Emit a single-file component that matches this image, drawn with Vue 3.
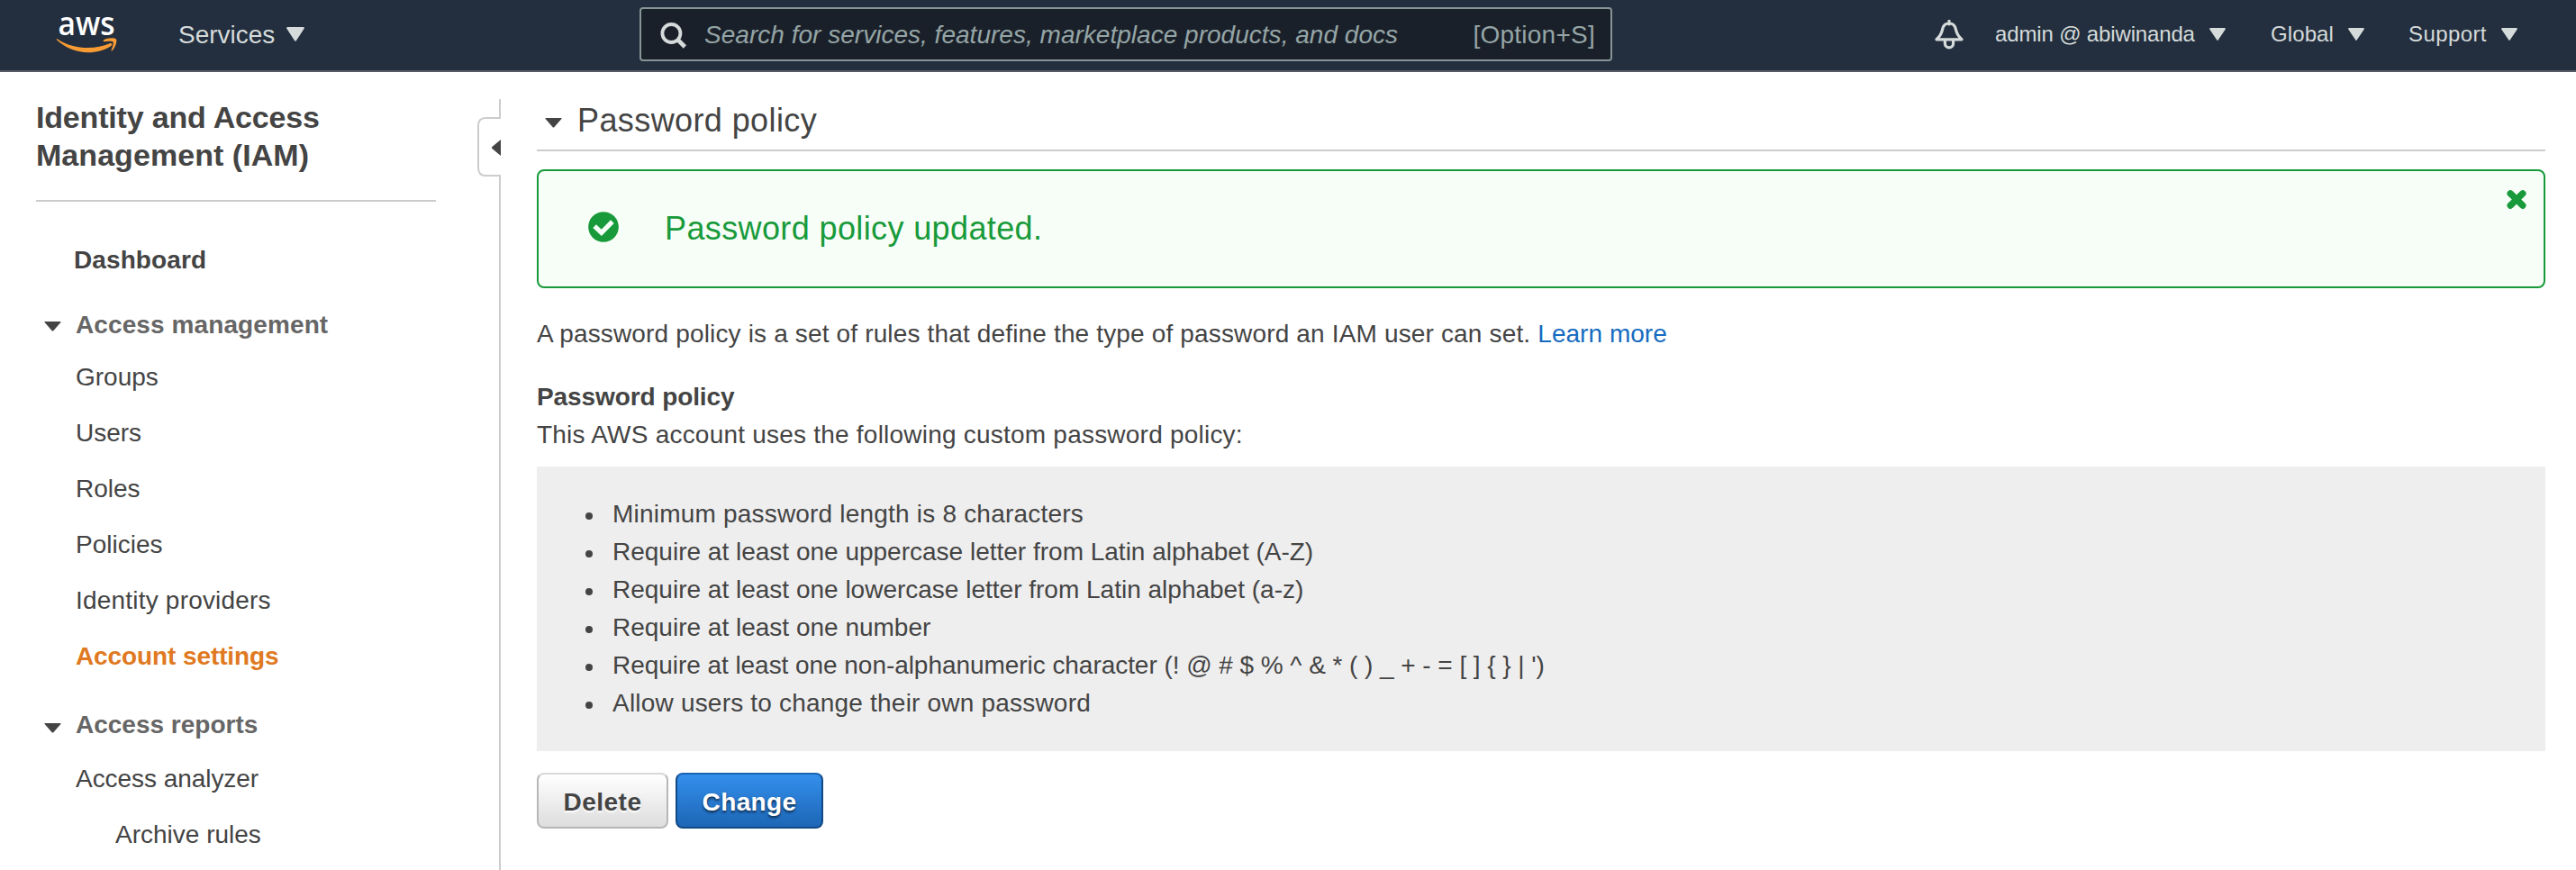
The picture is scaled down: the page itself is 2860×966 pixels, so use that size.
<script setup>
const accessManagement = [
  { label: 'Groups' },
  { label: 'Users' },
  { label: 'Roles' },
  { label: 'Policies' },
  { label: 'Identity providers', cls: 'wide' },
  { label: 'Account settings', cls: 'active' },
]
const accessReports = [
  { label: 'Access analyzer', cls: 'tight' },
  { label: 'Archive rules', cls: 'nested' },
]
const rules = [
  { text: 'Minimum password length is 8 characters', cls: 'wide' },
  { text: 'Require at least one uppercase letter from Latin alphabet (A-Z)' },
  { text: 'Require at least one lowercase letter from Latin alphabet (a-z)' },
  { text: 'Require at least one number' },
  { text: "Require at least one non-alphanumeric character (! @ # $ % ^ & * ( ) _ + - = [ ] { } | ')", cls: 'tight' },
  { text: 'Allow users to change their own password', cls: 'wide' },
]
</script>

<template>
  <div class="page">
    <header class="topbar">
      <svg class="logo" width="70" height="62" viewBox="0 0 70 62">
        <text x="2.6" y="38.5" textLength="63" lengthAdjust="spacingAndGlyphs" class="logo-text">aws</text>
        <g class="smile">
          <path d="M1.6 43.2C20 55.6 44 55.2 59.8 48.2C62 47.2 63.3 49.6 61.4 51C44 62 19 61 1.2 44.6C.4 43.6 .8 42.7 1.6 43.2Z" />
          <path d="M53 44.6C57 41.8 65.5 41.8 67 43.6C68.4 45.6 66 53.3 62.6 56.2C61.8 56.9 61.2 56.5 61.6 55.6C62.7 53 64.4 48 63.5 46.6C62.5 45.3 57 46 54 46.3C52.6 46.4 52.2 45.2 53 44.6Z" />
        </g>
      </svg>
      <div class="services">
        <span>Services</span>
        <svg width="20" height="16" viewBox="0 0 20 16"><path d="M1.5 0H18.5Q20.6 .2 19.5 2L11.2 14.8Q10 16.8 8.8 14.8L.5 2Q-.6 .2 1.5 0Z" fill="#d5dbdb" /></svg>
      </div>
      <div class="search">
        <svg width="30" height="30" viewBox="0 0 30 30" fill="none" stroke="#d5dbdb">
          <circle cx="12.4" cy="12" r="10" stroke-width="3.8" />
          <path d="M19.4 19L27.4 27" stroke-width="4.6" />
        </svg>
        <span class="placeholder">Search for services, features, marketplace products, and docs</span>
        <span class="shortcut">[Option+S]</span>
      </div>
      <div class="account">
        <svg class="bell" width="32" height="33" viewBox="0 0 32 33" fill="none" stroke="#d5dbdb" stroke-width="3.2" stroke-linejoin="round">
          <path d="M16 1V5" stroke-linecap="round" stroke-width="3" />
          <path d="M2 21.8C6 18.2 7.6 15.8 8.6 10.6C9.4 6 12 4 16 4S22.6 6 23.4 10.6C24.4 15.8 26 18.2 30 21.8Z" />
          <path d="M11.4 22.5V26.2C11.4 32.3 20.6 32.3 20.6 26.2V22.5" />
        </svg>
        <div class="menu user">
          <span>admin @ abiwinanda</span>
          <svg width="18" height="14" viewBox="0 0 18 14"><path d="M1.3 0H16.7Q18.5 .2 17.6 1.8L10 13Q9 14.8 8 13L.4 1.8Q-.5 .2 1.3 0Z" fill="#d5dbdb" /></svg>
        </div>
        <div class="menu region">
          <span>Global</span>
          <svg width="18" height="14" viewBox="0 0 18 14"><path d="M1.3 0H16.7Q18.5 .2 17.6 1.8L10 13Q9 14.8 8 13L.4 1.8Q-.5 .2 1.3 0Z" fill="#d5dbdb" /></svg>
        </div>
        <div class="menu support">
          <span>Support</span>
          <svg width="18" height="14" viewBox="0 0 18 14"><path d="M1.3 0H16.7Q18.5 .2 17.6 1.8L10 13Q9 14.8 8 13L.4 1.8Q-.5 .2 1.3 0Z" fill="#d5dbdb" /></svg>
        </div>
      </div>
    </header>

    <div class="body">
      <aside class="sidebar">
        <h1><span>Identity and Access</span><span class="second">Management (IAM)</span></h1>
        <hr />
        <a class="dashboard">Dashboard</a>
        <div class="group">
          <svg width="19" height="11" viewBox="0 0 19 11"><path d="M.8 0H18.2Q19 .2 18.4 1L10.3 10.2Q9.5 11 8.7 10.2L.6 1Q0 .2 .8 0Z" fill="#444" /></svg>
          <span class="wider">Access management</span>
        </div>
        <nav>
          <a v-for="i in accessManagement" :key="i.label" :class="i.cls">{{ i.label }}</a>
        </nav>
        <div class="group reports">
          <svg width="19" height="11" viewBox="0 0 19 11"><path d="M.8 0H18.2Q19 .2 18.4 1L10.3 10.2Q9.5 11 8.7 10.2L.6 1Q0 .2 .8 0Z" fill="#444" /></svg>
          <span>Access reports</span>
        </div>
        <nav>
          <a v-for="i in accessReports" :key="i.label" :class="i.cls">{{ i.label }}</a>
        </nav>
      </aside>

      <div class="divider">
        <svg width="28" height="856" viewBox="0 0 28 856" fill="none">
          <path d="M25 0V21H9Q1 21 1 30V76Q1 85 9 85H25V856" stroke="#ccc" stroke-width="2" />
          <path d="M26 45V63L16.4 55Q15.4 54 16.4 53Z" fill="#444" />
        </svg>
      </div>

      <main>
        <h2>
          <svg width="19" height="11" viewBox="0 0 19 11"><path d="M.8 0H18.2Q19 .2 18.4 1L10.3 10.2Q9.5 11 8.7 10.2L.6 1Q0 .2 .8 0Z" fill="#444" /></svg>
          <span>Password policy</span>
        </h2>
        <div class="alert">
          <svg class="check" width="34" height="34" viewBox="0 0 34 34">
            <circle cx="17" cy="17" r="16.8" fill="#189a3b" />
            <path d="M9 17.9L14.8 23.4L25 13" fill="none" stroke="#f7fef7" stroke-width="5.2" stroke-linecap="square" />
          </svg>
          <p>Password policy updated.</p>
          <svg class="close" width="22" height="21" viewBox="0 0 22 21"><path d="M4.2 3.9L17.8 17.1M17.8 3.9L4.2 17.1" stroke="#189a3b" stroke-width="7.4" stroke-linecap="round" /></svg>
        </div>
        <p class="intro"><span>A password policy is a set of rules that define the type of password an IAM user can set.</span><a>Learn more</a></p>
        <h3>Password policy</h3>
        <p class="lead">This AWS account uses the following custom password policy:</p>
        <ul>
          <li v-for="r in rules" :key="r.text" :class="r.cls">{{ r.text }}</li>
        </ul>
        <div class="actions">
          <button class="delete">Delete</button>
          <button class="change">Change</button>
        </div>
      </main>
    </div>
  </div>
</template>

<style>
body { margin: 0; background: #fff; overflow: hidden; }
</style>

<style scoped>
* { box-sizing: border-box; }
.page { width: 2860px; height: 966px; overflow: hidden; font: 28px/42px "Liberation Sans", Arial, sans-serif; color: #444; white-space: nowrap; }
svg { display: block; flex: none; }
h1, h2, h3, p, ul { margin: 0; padding: 0; }

.topbar { height: 80px; background: #232f3e; border-bottom: 2px solid #545b64; display: flex; color: #d5dbdb; }
.logo { margin: 0 0 0 62px; overflow: visible; }
.logo-text { font: 600 36px "Open Sans", "Noto Sans", sans-serif; fill: #fff; }
.smile { fill: #f79c34; }
.services { display: flex; margin: 18px 0 0 66px; width: 140px; justify-content: space-between; align-items: flex-start; }
.services svg { margin-top: 12px; }
.search { margin: 8px 0 0 372px; width: 1080px; height: 60px; border: 2px solid #879596; border-radius: 4px; background: #1a2029; color: #95a5a6; display: flex; padding: 8px 17px 0 21px; }
.search svg { margin-top: 7px; }
.placeholder { font-style: italic; margin-left: 19px; letter-spacing: 0.02px; }
.shortcut { margin-left: auto; letter-spacing: 0.25px; }
.account { display: flex; margin-left: 358px; font-size: 24px; }
.bell { margin-top: 22px; }
.menu { display: flex; padding-top: 17px; justify-content: space-between; }
.menu svg { margin-top: 14px; }
.user { margin-left: 35px; width: 256px; letter-spacing: -0.15px; }
.region { margin-left: 50px; width: 104px; letter-spacing: 0.1px; }
.support { margin-left: 49px; width: 121px; letter-spacing: 0.4px; }

.body { display: flex; height: 886px; }
.sidebar { width: 484px; padding: 29px 0 0 40px; }
h1 { font-size: 34px; line-height: 42px; padding-bottom: 29px; letter-spacing: -0.18px; }
h1 span { display: block; }
h1 .second { letter-spacing: 0.05px; }
hr { margin: 0; border: 0; height: 2px; background: #ccc; }
.dashboard { display: block; font-weight: bold; margin: 44px 0 0 42px; letter-spacing: 0.1px; }
.group { display: flex; margin: 30px 0 6px 9px; font-weight: bold; color: #666; gap: 16px; }
.group svg { margin-top: 17px; }
.group .wider { letter-spacing: 0.1px; }
.group.reports { margin: 24px 0 8px 9px; }
.group.reports svg { margin-top: 19px; }
nav { display: grid; grid-auto-rows: 62px; line-height: 62px; padding-left: 44px; }
nav .active { font-weight: bold; color: #e07921; letter-spacing: -0.1px; }
nav .nested { padding-left: 44px; }
.wide { letter-spacing: 0.2px; }
.tight { letter-spacing: -0.05px; }
.divider { width: 28px; margin: 30px 0 0 46px; }

main { width: 2230px; margin-left: 38px; }
h2 { display: flex; font-size: 36px; font-weight: normal; line-height: 42px; height: 88px; padding: 33px 0 0 9px; border-bottom: 2px solid #ccc; gap: 17px; letter-spacing: 0.4px; }
h2 svg { margin-top: 18px; }
.alert { margin-top: 20px; height: 132px; border: 2px solid #189a3b; border-radius: 8px; background: #f7fef7; color: #189a3b; display: flex; padding: 0 19px 0 55px; font-size: 36px; letter-spacing: 0.38px; }
.check { margin-top: 45px; }
.alert p { margin: 43px 0 0 51px; }
.close { margin: 21px 0 0 auto; }
.intro { margin-top: 30px; display: flex; letter-spacing: 0.155px; }
.intro a { color: #166bc0; margin-left: 8px; letter-spacing: 0.04px; }
h3 { font-size: 28px; margin-top: 28px; letter-spacing: -0.1px; }
.lead { letter-spacing: 0.22px; }
ul { margin-top: 14px; height: 316px; background: #eee; padding: 32px 0 0 54px; list-style: none; }
li { display: flex; align-items: center; }
li::before { content: ""; width: 8px; height: 8px; border-radius: 50%; background: #444; margin: 3px 22px 0 0; }
.actions { display: flex; gap: 8px; margin-top: 24px; }
button { height: 62px; border-radius: 8px; font: bold 28px/42px "Liberation Sans", Arial, sans-serif; padding: 3px 0 0; margin: 0; }
.delete { width: 146px; color: #444; border: 2px solid #b7b7b7; border-top-color: #d8d8d8; background: linear-gradient(#fff, #ddd); letter-spacing: 0.5px; text-shadow: 0 2px 2px #fff; }
.change { width: 164px; color: #fff; border: 2px solid #124a85; border-top-color: #1a62b4; background: linear-gradient(#348fec, #1c66b6); letter-spacing: 0.35px; text-shadow: 0 2px 3px rgba(0, 0, 0, 0.65); }
</style>
